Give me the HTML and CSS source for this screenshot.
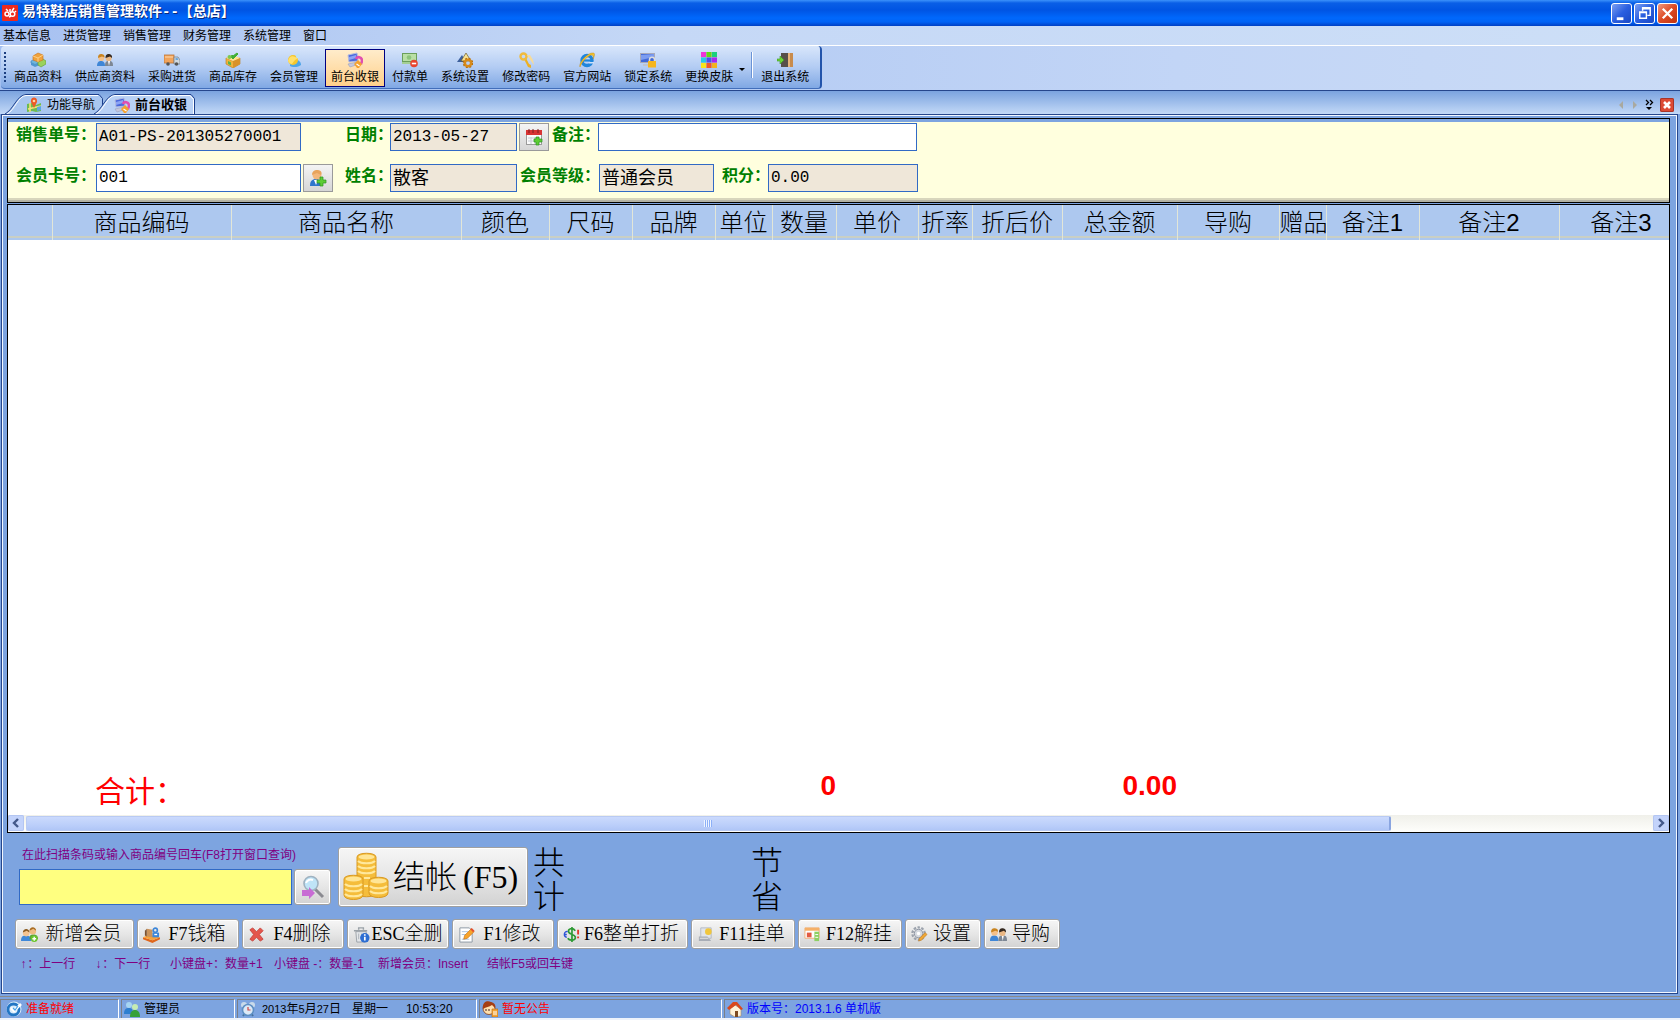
FILE: index.html
```html
<!DOCTYPE html>
<html lang="zh-CN">
<head>
<meta charset="utf-8">
<title>易特鞋店销售管理软件--【总店】</title>
<link rel="stylesheet" href="styles.css">
</head>
<body>
<svg class="sprite" aria-hidden="true">
  <symbol id="boxes" viewBox="0 0 16 16"><path d="M1 9l5-2 4 3-5 3-4-2z" fill="#6fb6dc" stroke="#3a7fb8" stroke-width=".6"/><path d="M1 10v3l4 2 5-2v-3l-5 2z" fill="#4f97cf"/><path d="M8 9l5-2 3 2v3l-5 3-3-2z" fill="#9ad25c" stroke="#5f9a34" stroke-width=".6"/><path d="M3 4l5-3 5 2v5l-5 2-5-2z" fill="#f0a23c" stroke="#c8741c" stroke-width=".6"/><path d="M3 4l5 2 5-3M8 6v4" fill="none" stroke="#ffd38a" stroke-width=".9"/></symbol>
  <symbol id="people" viewBox="0 0 16 16"><path d="M0 14c0-4 2-5 4-5s4 1 4 5z" fill="#3f86d6"/><path d="M8 14c0-4 1-5 4-5s4 1 4 5z" fill="#7d8794"/><path d="M11 9h2l-1 5z" fill="#fff"/><circle cx="4.300" cy="6" r="3" fill="#f4c089"/><circle cx="11.600" cy="6.300" r="3" fill="#eab783"/><path d="M1 6c0-3 1-4 3-4s4 1 3.500 3.500L5 4.500z" fill="#c98420"/><path d="M8.500 6c0-3 1-4 3-4s4 1 3.500 4l-2-1.500z" fill="#34281f"/></symbol>
  <symbol id="truck" viewBox="0 0 16 16"><rect x="0" y="3" width="10" height="8" fill="#f1a45c" stroke="#bd7434" stroke-width=".8"/><path d="M1 5h8" stroke="#ffd8aa"/><path d="M10 5h4l2 3v4h-6z" fill="#cfd8e0" stroke="#77838f" stroke-width=".8"/><path d="M11.500 6h2l1 2h-3z" fill="#6aa7de"/><circle cx="4" cy="12" r="1.800" fill="#555"/><circle cx="12.500" cy="12" r="1.800" fill="#555"/></symbol>
  <symbol id="stock" viewBox="0 0 16 16"><path d="M1 6l7 3 7-3v6l-7 4-7-4z" fill="#f0b23c" stroke="#b97a17" stroke-width=".6"/><path d="M8 9v7l7-4V6z" fill="#d8922a"/><path d="M1 6l7-3 7 3-7 3z" fill="#ffe08c"/><path d="M6 5l2 2 5-5-1-1-4 3-1-1z" fill="#41ae35" stroke="#41ae35"/><circle cx="4.500" cy="5" r="2" fill="#7cc850"/><path d="M3 9l3 1.500v3L3 12z" fill="#59b44a"/></symbol>
  <symbol id="member" viewBox="0 0 16 16"><path d="M4 14c0-4 3-6 6-6s5 2 5 5c-2 2-8 3-11 1z" fill="#4da5e8"/><circle cx="7" cy="8" r="5" fill="#f6c62c"/><path d="M2 9c1-6 6-6 10-2-3 0-4 2-6 5-2 0-3-1-4-3z" fill="#ffe06a"/><circle cx="12" cy="4" r="2.200" fill="#bde0f7"/></symbol>
  <symbol id="cashier" viewBox="0 0 16 16"><path d="M1 3l9-2 1 8-9 1z" fill="#4b68dc" stroke="#b4bce0"/><path d="M2 5l7-2 0 3-7 2z" fill="#8ca4f4"/><path d="M1 12l9-2 2 2-9 3z" fill="#c4c8dc" stroke="#9a9fc0" stroke-width=".6"/><path d="M9 7c1-3 6-2 6 1.500 0 2-1 2-1 4" fill="none" stroke="#e04fb0" stroke-width="2.600"/><path d="M7 12l4-4 4 4-3 4h-2z" fill="#f6a22d"/><path d="M9.500 12l3 2" stroke="#fff" stroke-width="1.200"/></symbol>
  <symbol id="payment" viewBox="0 0 16 16"><rect x=".5" y="1.500" width="14" height="8" fill="#b9dfa5" stroke="#6b9f5b"/><rect x="0" y="10" width="11" height="2" fill="#a4cf94"/><circle cx="7" cy="5.500" r="2.300" fill="#8cc47a"/><circle cx="12" cy="11.500" r="3.800" fill="#e8442e"/><path d="M9.800 11.500h4.400" stroke="#fff" stroke-width="1.600"/></symbol>
  <symbol id="settings" viewBox="0 0 16 16"><path d="M0 10l5-7 4 7z" fill="#3c5f9c"/><path d="M4 9l5-8 5 8z" fill="#f7e294" stroke="#6d5b28" stroke-width=".7"/><circle cx="11" cy="11" r="3.200" fill="none" stroke="#d88a18" stroke-width="2.600"/><circle cx="11" cy="11" r="4.700" fill="none" stroke="#b9700c" stroke-width="1.200" stroke-dasharray="2 1.700"/></symbol>
  <symbol id="key" viewBox="0 0 16 16"><path d="M6 7l4 8 3 1v-3l-2-1-3-6z" fill="#edb024"/><circle cx="5.500" cy="4.500" r="3" fill="none" stroke="#f0bb3e" stroke-width="2.400"/><path d="M9 3l4 6 3 4-1-5-3-5z" fill="#f7db98"/></symbol>
  <symbol id="ie" viewBox="0 0 16 16"><circle cx="8" cy="8.500" r="5" fill="none" stroke="#1f86dc" stroke-width="3.400"/><path d="M4 8.500h9" stroke="#1f86dc" stroke-width="2.200"/><path d="M9.500 10h5.500v1.600h-5z" fill="#cfe0f8"/><path d="M1 15C-1 11 9 0 14 1c3 0 1 4 0 6 1-4-1-5-4-3C5 7 2 12 1 15z" fill="#f3c22d" stroke="#b98412" stroke-width=".4"/></symbol>
  <symbol id="lockpc" viewBox="0 0 16 16"><rect x=".5" y="1.500" width="14" height="9" fill="#4169d8" stroke="#a8a8b8"/><path d="M1 3l13-1v3L1 8z" fill="#7c9cf0"/><path d="M3 12h8v2H3z" fill="#c0c4ce"/><path d="M9.500 10V7.500c0-3 5-3 5 0V10" fill="none" stroke="#dcdcdc" stroke-width="1.500"/><rect x="8" y="9" width="8" height="6.500" fill="#f5b51e"/></symbol>
  <symbol id="skin" viewBox="0 0 16 16"><rect width="16" height="16" fill="#b9b9c9"/><rect width="5" height="5" fill="#f033d8"/><rect x="5.500" width="5" height="5" fill="#63d813"/><rect x="11" width="5" height="5" fill="#19d07c"/><rect y="5.500" width="5" height="5" fill="#26c9e8"/><rect x="5.500" y="5.500" width="5" height="5" fill="#4c4ff0"/><rect x="11" y="5.500" width="5" height="5" fill="#a62af0"/><rect y="11" width="5" height="5" fill="#f7e41c"/><rect x="5.500" y="11" width="5" height="5" fill="#f2582a"/><rect x="11" y="11" width="5" height="5" fill="#f3b41c"/></symbol>
  <symbol id="exit" viewBox="0 0 16 16"><rect x="4" y="1" width="9" height="14" fill="#57504a"/><path d="M11 1h5v14h-5z" fill="#c88b4c"/><path d="M11 1h2v14h-2z" fill="#e8b67c"/><path d="M0 7h3V4l4 4-4 4V9H0z" fill="#6fd23a" stroke="#3b9a20" stroke-width=".6"/></symbol>
  <symbol id="guide" viewBox="0 0 16 16"><path d="M1 7l5-1 4 2 5-2v8l-5 1-4-1-5 1z" fill="#6dbb50"/><path d="M4 6v9M2 12l13-3" stroke="#f3e27c" stroke-width="1.600" fill="none"/><path d="M11 10l4-1v4l-4 1z" fill="#5aa8e0"/><path d="M8 11L5 5c-1-6 7-6 6 0z" fill="#ec5a26"/><circle cx="8" cy="4" r="1.300" fill="#ffd6a0"/></symbol>
  <symbol id="adduser" viewBox="0 0 18 18"><path d="M1 17c0-5 2-7 6-7s5 2 5 7z" fill="#2f76cc"/><path d="M5 11h4l-2 5z" fill="#fff"/><circle cx="8" cy="6" r="4.500" fill="#f3b77b"/><path d="M3 6c0-4 3-5 5-5s6 1 4 5L8 4z" fill="#e8a45c"/><path d="M11 8h3v3h3v3h-3v3h-3v-3H8v-3h3z" fill="#5ccc34" stroke="#2b9422" stroke-width=".7"/></symbol>
  <symbol id="calendar" viewBox="0 0 18 18"><rect x="1.500" y="2.500" width="15" height="14" fill="#fafafa" stroke="#9b9b9b"/><path d="M1 2h16v5H1z" fill="#d83434"/><path d="M4 1v4M8 1v4M13 1v4" stroke="#7b2020"/><path d="M3 10h12M3 13h12M6 9v7M10 9v7" stroke="#c6ccd4"/><path d="M11 9h3v2h3v3h-3v3h-3v-3H9v-3h2z" fill="#5ccc34" stroke="#2b9422" stroke-width=".7"/></symbol>
  <symbol id="search" viewBox="0 0 24 24"><path d="M14 14l8 8" stroke="#8a8a90" stroke-width="3"/><circle cx="10" cy="8.500" r="7" fill="#bfe4f7" stroke="#9fb2c0" stroke-width="1.600"/><path d="M5 8c1-3 4-4 7-3" fill="none" stroke="#fff" stroke-width="2"/><path d="M1 15h7v-3l6 6-6 6v-3H1z" fill="#c86cd4"/></symbol>
  <symbol id="coins" viewBox="0 0 46 50"><g fill="#f5bd3b" stroke="#d99a24"><path d="M14 5v36c0 5 19 5 19 0V5c0-5-19-5-19 0z"/><path d="M1 27v16c0 6 19 6 19 0V27c0-5-19-5-19 0z"/><path d="M26 29v12c0 6 19 6 19 0V29c0-5-19-5-19 0z"/></g><g fill="#ffe595"><ellipse cx="23.500" cy="5" rx="8" ry="2.500"/><ellipse cx="10.500" cy="27" rx="8" ry="2.500"/><ellipse cx="35.500" cy="29" rx="8" ry="2.500"/></g><g fill="none" stroke="#ffe89c" stroke-width="2.200"><path d="M15 9c3 3 14 3 17 0M15 14c3 3 14 3 17 0M15 19c3 3 14 3 17 0M21 26h6M21 34h4M2 32c3 3 14 3 17 0M2 37c3 3 14 3 17 0M2 42c3 3 14 3 17 0M27 34c3 3 14 3 17 0M27 39c3 3 14 3 17 0"/></g></symbol>
  <symbol id="newmember" viewBox="0 0 18 18"><path d="M0 16c0-5 2-6 5-6s6 1 6 6z" fill="#3f88d8"/><path d="M9 14c0-4 1-5 4-5s5 1 5 5z" fill="#5aa436"/><circle cx="12.500" cy="5.500" r="3.500" fill="#efbb83"/><path d="M9 5c0-5 7-5 7 0l-3-2z" fill="#a86c22"/><circle cx="5.500" cy="7.500" r="3.500" fill="#f5c490"/><path d="M2 7c0-5 7-5 7 0L6 5z" fill="#8a5a20"/><circle cx="14" cy="13.500" r="3.500" fill="#6bc52c"/><path d="M12 13.500h4M14 11.500v4" stroke="#fff" stroke-width="1.400"/></symbol>
  <symbol id="cashbox" viewBox="0 0 18 18"><path d="M0 12l10 3 8-3v2l-8 4-10-4z" fill="#e0671c"/><path d="M0 12l7-3 11 3-8 3z" fill="#f7a13a"/><path d="M4 3l6 1v8l-6-1z" fill="#c9935c"/><path d="M2 5l2-2v8l-2-1z" fill="#7b5130"/><circle cx="13" cy="4.500" r="2.200" fill="none" stroke="#3d86d8" stroke-width="1.800"/><path d="M10 7h7v5h-7z" fill="#3d86d8"/><path d="M12 9h3" stroke="#fff" stroke-width="1.400"/></symbol>
  <symbol id="delete" viewBox="0 0 18 18"><path d="M2 4l3-2 4 4 4-4 3 3-4 4 4 5-3 2-4-4-4 4-3-2 4-5z" fill="#e4564c" stroke="#c23a34" stroke-width=".8"/></symbol>
  <symbol id="trash" viewBox="0 0 18 18"><path d="M3 6h11l-1 11H4z" fill="#e4e7ea" stroke="#9ba2a8"/><path d="M1 5h14M6 4V2h5v2" fill="none" stroke="#9ba2a8" stroke-width="1.500"/><path d="M6 8v6M9 8v6" stroke="#acb3b9"/><circle cx="12.500" cy="12.500" r="5" fill="#2d6ed2"/><path d="M12.500 8.800v1.600M12.500 11.400v4" stroke="#fff" stroke-width="1.800"/></symbol>
  <symbol id="edit" viewBox="0 0 18 18"><path d="M2 2h10l3 3v12H2z" fill="#fff" stroke="#8c98a4"/><path d="M4 6h7M4 9h5M4 14h8" stroke="#a9c1dc"/><path d="M6 14l1-4 7-7 3 3-7 7z" fill="#f7a42c" stroke="#c2721a" stroke-width=".7"/><path d="M13 3.500l1.500-1.500 3 3L16 6.500z" fill="#e3502f"/></symbol>
  <symbol id="discount" viewBox="0 0 18 18"><path d="M13 5c-3-4-8-2-7 1.500 1 2.500 6 2 7 5 1 4-6 4.500-8 1.500M9.500 1v16" fill="none" stroke="#2f9a35" stroke-width="1.800"/><path d="M5 6c-4-1-5 5-1 6M1 9h3" fill="none" stroke="#2e55d8" stroke-width="1.500"/><path d="M16 4v5M16 11v2" stroke="#df3c2b" stroke-width="2"/></symbol>
  <symbol id="hang" viewBox="0 0 18 18"><path d="M4 2h11v11H4z" fill="#e0e4ea" stroke="#b4bac4"/><path d="M2 11h9l4 5H2z" fill="#a8adb6"/><path d="M3 13h9" stroke="#e7e7e7"/><circle cx="12" cy="6" r="3.500" fill="#f0c63d"/></symbol>
  <symbol id="unhang" viewBox="0 0 18 18"><path d="M1 2h15v11H1z" fill="#fff" stroke="#f0b078"/><path d="M1 2h15v3H1z" fill="#f5b068"/><path d="M3 7h5v5H3z" fill="#e25b42"/><path d="M11 6h5v10h-5z" fill="#8ed063"/><path d="M12 9h3M12 12h3" stroke="#fff"/></symbol>
  <symbol id="gear" viewBox="0 0 18 18"><circle cx="8" cy="8" r="6.500" fill="none" stroke="#9ca3ad" stroke-width="2.400" stroke-dasharray="2.600 1.500"/><circle cx="8" cy="8" r="4.500" fill="#d5d9df" stroke="#8b93a0"/><circle cx="8" cy="8" r="1.800" fill="#fff"/><path d="M8 16l1-3 6-6 2 2-6 6z" fill="#f0a736" stroke="#b67621" stroke-width=".6"/></symbol>
  <symbol id="ready" viewBox="0 0 16 16"><circle cx="8" cy="8" r="7.500" fill="#d9ecfa"/><circle cx="7.500" cy="8.500" r="5.500" fill="none" stroke="#2276c4" stroke-width="2.800"/><path d="M5 7l3 3 7-7" fill="none" stroke="#fff" stroke-width="2.600"/><path d="M7 7l2 2 3-4" fill="none" stroke="#49a4ea" stroke-width="1.200"/></symbol>
  <symbol id="group" viewBox="0 0 16 16"><circle cx="5" cy="4" r="3" fill="#a6d5f2"/><path d="M0 13c0-5 2-6 5-6s4 2 4 6z" fill="#2e7fd0"/><circle cx="11" cy="6" r="3" fill="#c5ebb3"/><path d="M6 16c0-5 2-7 5-7s5 2 5 7z" fill="#35a13a"/></symbol>
  <symbol id="clock" viewBox="0 0 16 16"><circle cx="4" cy="4" r="3" fill="#c9daea"/><circle cx="12" cy="4" r="3" fill="#c9daea"/><path d="M3 15l2-3M13 15l-2-3" stroke="#48719c" stroke-width="2"/><circle cx="8" cy="9" r="5.500" fill="#dce9f6" stroke="#5d8fc4" stroke-width="1.600"/><path d="M8 6v3h2.500" fill="none" stroke="#c44" stroke-width="1.200"/></symbol>
  <symbol id="notice" viewBox="0 0 16 16"><circle cx="7" cy="7.500" r="6" fill="#ffe0ae" stroke="#8a3b12" stroke-width=".8"/><path d="M1 8C0 1 5-1 9 1c4 1 5 4 4 6L10 4C7 6 4 6 1 8z" fill="#a63f14"/><path d="M4 8v2M7 8v2" stroke="#422"/><path d="M10 8h6v8h-6z" fill="#f5a637" stroke="#b26411" stroke-width=".6"/><path d="M11 11h4M11 13h4" stroke="#fff"/></symbol>
  <symbol id="home" viewBox="0 0 16 16"><path d="M3 8l5-4 6 4v7l-6 1-5-3z" fill="#fff3d8" stroke="#a98a5e" stroke-width=".6"/><path d="M0 7l6-6 4 0 6 7-2 1-5-5-7 5z" fill="#d9481c"/><path d="M8 10h3v6H8z" fill="#7c4a20"/></symbol>
</svg>

<header class="titlebar">
  <svg class="app-logo" viewBox="0 0 16 16"><rect width="16" height="16" rx="1" fill="#ee2a1e"/><g fill="none" stroke="#fff" stroke-width="1.500"><circle cx="5" cy="9" r="2"/><circle cx="10.500" cy="9" r="2.300"/><path d="M4 4l2 2M8 4v3M12 3l-2 3M13 7l1-1M7 12l2-1"/></g></svg>
  <h1>易特鞋店销售管理软件--【总店】</h1>
  <div class="window-buttons">
    <button aria-label="最小化"><svg viewBox="0 0 20 20"><path d="M5 14h7v3H5z" fill="#fff"/></svg></button>
    <button aria-label="还原"><svg viewBox="0 0 20 20"><path d="M8 7V4h8v8h-3M8 5h8" fill="none" stroke="#fff" stroke-width="1.500"/><path d="M5 8.500h7v6.500H5zM5 9h7" fill="none" stroke="#fff" stroke-width="1.500"/></svg></button>
    <button class="close" aria-label="关闭"><svg viewBox="0 0 20 20"><path d="M5 5l10 10M15 5L5 15" stroke="#fff" stroke-width="2.400"/></svg></button>
  </div>
</header>

<nav class="menubar">
  <button>基本信息</button><button>进货管理</button><button>销售管理</button><button>财务管理</button><button>系统管理</button><button>窗口</button>
</nav>

<div class="toolbar-strip">
  <div class="toolbar">
    <button><svg><use href="#boxes"/></svg>商品资料</button>
    <button><svg><use href="#people"/></svg>供应商资料</button>
    <button><svg><use href="#truck"/></svg>采购进货</button>
    <button><svg><use href="#stock"/></svg>商品库存</button>
    <button><svg><use href="#member"/></svg>会员管理</button>
    <button class="active"><svg><use href="#cashier"/></svg>前台收银</button>
    <button><svg><use href="#payment"/></svg>付款单</button>
    <button><svg><use href="#settings"/></svg>系统设置</button>
    <button><svg><use href="#key"/></svg>修改密码</button>
    <button><svg><use href="#ie"/></svg>官方网站</button>
    <button><svg><use href="#lockpc"/></svg>锁定系统</button>
    <button><svg><use href="#skin"/></svg>更换皮肤</button>
    <i class="caret"></i>
    <i class="divider"></i>
    <button><svg><use href="#exit"/></svg>退出系统</button>
  </div>
</div>

<div class="tabstrip">
  <button class="tab">
    <svg class="tab-shape" viewBox="0 0 98 20" preserveAspectRatio="none"><path d="M0 20C8 16 12 1 21 .5H94l3.500 4V20z" fill="#a9c6f0"/><path d="M0 20C8 16 12 1 21 .5H94l3.500 4V20" fill="none" stroke="#1c3f8c"/><path d="M2 20C10 16 13 2 21 1.500H93" fill="none" stroke="#fff"/></svg>
    <svg class="icon"><use href="#guide"/></svg><span>功能导航</span>
  </button>
  <button class="tab current">
    <svg class="tab-shape" viewBox="0 0 101 20" preserveAspectRatio="none"><path d="M0 20C8 16 12 1 21 .5H97l3.500 4V20z" fill="#b9d1f5"/><path d="M0 20C8 16 12 1 21 .5H97l3.500 4V20" fill="none" stroke="#1c3f8c"/><path d="M2 20C10 16 13 2 21 1.500H96l3.500 4V20" fill="none" stroke="#fff"/></svg>
    <svg class="icon"><use href="#cashier"/></svg><span>前台收银</span>
  </button>
  <div class="tab-tools">
    <button aria-label="上一个"><svg viewBox="0 0 14 14"><path d="M9 3v8L5 7z" fill="#a9a9a0"/></svg></button>
    <button aria-label="下一个"><svg viewBox="0 0 14 14"><path d="M5 3v8l4-4z" fill="#a9a9a0"/></svg></button>
    <button aria-label="更多"><svg viewBox="0 0 14 14"><path d="M4 2l2.500 2.500L4 7M8 2l2.500 2.500L8 7" fill="none" stroke="#000" stroke-width="1.300"/><path d="M4 9h6l-3 3z"/></svg></button>
    <button class="tab-close" aria-label="关闭标签"><svg viewBox="0 0 14 14"><path d="M4 4l6 6M10 4l-6 6" stroke="#fff" stroke-width="2.600"/></svg></button>
  </div>
</div>

<main class="workspace">
  <form class="order-form">
    <div class="form-row">
      <label class="wide" for="order-no">销售单号：</label><input id="order-no" class="w-card" value="A01-PS-201305270001" readonly>
      <label class="short date" for="order-date">日期：</label><input id="order-date" class="w-name" value="2013-05-27" readonly>
      <button type="button" class="mini" aria-label="选择日期"><svg><use href="#calendar"/></svg></button>
      <label class="short" for="remark">备注：</label><input id="remark" class="w-remark">
    </div>
    <div class="form-row">
      <label class="wide" for="card-no">会员卡号：</label><input id="card-no" class="w-card" value="001">
      <button type="button" class="mini" aria-label="选择会员"><svg><use href="#adduser"/></svg></button>
      <label class="short name" for="member-name">姓名：</label><input id="member-name" class="w-name han" value="散客" readonly>
      <label class="level" for="member-level">会员等级：</label><input id="member-level" class="w-level han" value="普通会员" readonly>
      <label class="short points" for="points">积分：</label><input id="points" class="w-points" value="0.00" readonly>
    </div>
  </form>

  <section class="grid-panel">
    <div class="grid-view">
      <table>
        <colgroup><col class="c44"><col class="c179"><col class="c230"><col class="c88"><col class="c83"><col class="c83"><col class="c57"><col class="c64"><col class="c82"><col class="c54"><col class="c90"><col class="c115"><col class="c102"><col class="c47"><col class="c93"><col class="c140"><col class="c124"></colgroup>
        <thead><tr><th></th><th>商品编码</th><th>商品名称</th><th>颜色</th><th>尺码</th><th>品牌</th><th>单位</th><th>数量</th><th>单价</th><th>折率</th><th>折后价</th><th>总金额</th><th>导购</th><th>赠品</th><th>备注1</th><th>备注2</th><th>备注3</th></tr></thead>
        <tbody><tr><td colspan="17"></td></tr></tbody>
        <tfoot><tr><td></td><td colspan="2" class="total-label">合计：</td><td colspan="5" class="total">0</td><td colspan="4" class="total">0.00</td><td colspan="5"></td></tr></tfoot>
      </table>
    </div>
    <div class="scrollbar">
      <button aria-label="向左滚动"><svg viewBox="0 0 16 16"><path d="M10 4L6 8l4 4" fill="none" stroke="#44598a" stroke-width="2.400"/></svg></button>
      <div class="track"><div class="thumb"><i class="grip"></i></div></div>
      <button aria-label="向右滚动"><svg viewBox="0 0 16 16"><path d="M6 4l4 4-4 4" fill="none" stroke="#44598a" stroke-width="2.400"/></svg></button>
    </div>
  </section>

  <section class="controls">
    <div class="checkout">
      <div class="scan">
        <label for="barcode">在此扫描条码或输入商品编号回车(F8打开窗口查询)</label>
        <div class="scan-row">
          <input id="barcode">
          <button class="find" aria-label="查询"><svg><use href="#search"/></svg></button>
        </div>
      </div>
      <button class="settle"><svg><use href="#coins"/></svg><span>结帐<span class="settle-key">(F5)</span></span></button>
      <div class="tally">共<br>计</div>
      <div class="tally saved">节<br>省</div>
    </div>
    <div class="actions">
      <button class="b119"><svg><use href="#newmember"/></svg><span>新增会员</span></button>
      <button class="b102"><svg><use href="#cashbox"/></svg><span><kbd>F7</kbd>钱箱</span></button>
      <button class="b102"><svg><use href="#delete"/></svg><span><kbd>F4</kbd>删除</span></button>
      <button class="b102"><svg><use href="#trash"/></svg><span><kbd>ESC</kbd>全删</span></button>
      <button class="b102"><svg><use href="#edit"/></svg><span><kbd>F1</kbd>修改</span></button>
      <button class="b131"><svg><use href="#discount"/></svg><span><kbd>F6</kbd>整单打折</span></button>
      <button class="b104"><svg><use href="#hang"/></svg><span><kbd>F11</kbd>挂单</span></button>
      <button class="b104"><svg><use href="#unhang"/></svg><span><kbd>F12</kbd>解挂</span></button>
      <button class="b76"><svg><use href="#gear"/></svg><span>设置</span></button>
      <button class="b76"><svg><use href="#people"/></svg><span>导购</span></button>
    </div>
    <div class="hints">
      <span class="arrow-hint"><b>↑</b>：上一行</span><span class="arrow-hint"><b>↓</b>：下一行</span><span class="h104">小键盘+：数量+1</span><span class="h104">小键盘 -：数量-1</span><span class="h109">新增会员：Insert</span><span>结帐F5或回车键</span>
    </div>
  </section>
</main>

<footer class="statusbar">
  <div class="s120 red"><svg><use href="#ready"/></svg>准备就绪</div>
  <div class="s114"><svg><use href="#group"/></svg>管理员</div>
  <div class="s243"><svg><use href="#clock"/></svg><time><span class="num">2013</span>年<span class="num">5</span>月<span class="num">27</span>日</time><span>星期一</span><time class="time">10:53:20</time></div>
  <div class="s244 red"><svg><use href="#notice"/></svg>暂无公告</div>
  <div class="rest blue"><svg><use href="#home"/></svg><span>版本号：2013.1.6 单机版</span></div>
</footer>
</body>
</html>
```
FILE: styles.css
```css
* { box-sizing: border-box; }

body {
  margin: 0;
  height: 100vh;
  min-height: 600px;
  display: flex;
  flex-direction: column;
  overflow: hidden;
  background: #7da4e0;
  color: #000;
  font: 12px/16px "Liberation Sans", "Noto Sans CJK SC", sans-serif;
}

button { margin: 0; padding: 0; border: 0; background: none; color: inherit; font: inherit; white-space: nowrap; }
svg { display: block; flex: none; }
input { border: 1px solid #316ac5; border-radius: 0; outline: 0; }
.sprite { position: absolute; width: 0; height: 0; }

/* Title bar */
.titlebar {
  display: flex;
  align-items: center;
  height: 26px;
  padding: 0 2px;
  flex: none;
  background: linear-gradient(#3c92fb 0, #0a5fe6 3px, #0054e3 10px, #0068fc 18px, #0062f5 22px, #0040c4 26px);
}
.app-logo { width: 16px; height: 16px; }
.titlebar h1 {
  flex: 1;
  margin: 0 0 0 4px;
  padding-bottom: 2px;
  color: #fff;
  font: bold 14px/20px "Liberation Mono", "Noto Sans CJK SC", monospace;
  text-shadow: 1px 1px 0 #0a2a7c;
}
.window-buttons { display: flex; gap: 2px; }
.window-buttons button {
  width: 21px;
  height: 21px;
  border: 1px solid #fff;
  border-radius: 3px;
  background: linear-gradient(135deg, #7c9ff2, #2a5fe0 50%, #1a48c4);
}
.window-buttons .close { background: linear-gradient(135deg, #f0987e, #dd4a24 50%, #c0330f); }

/* Menu and toolbar */
.menubar {
  display: flex;
  gap: 12px;
  height: 20px;
  padding: 0 3px;
  flex: none;
  border-bottom: 1px solid #fff;
  background: linear-gradient(90deg, #a7c1f1, #c5d8f6 40%, #cddff7);
}
.toolbar-strip {
  display: flex;
  height: 45px;
  flex: none;
  border-bottom: 1px solid #26468c;
  background: linear-gradient(90deg, #a3bff0, #c2d5f6 70%, #cadbf6);
}
.toolbar {
  display: flex;
  gap: 1px;
  height: 43px;
  margin-left: 1px;
  padding: 3px 5px 2px 7px;
  position: relative;
  border-right: 2px solid #2354ab;
  border-bottom: 1px solid #426eba;
  border-radius: 4px;
  background: linear-gradient(#d8e6fb, #b3ccf3 50%, #80a8e4);
}
.toolbar::before {
  content: "";
  position: absolute;
  left: 3px;
  top: 6px;
  width: 2px;
  height: 31px;
  background: repeating-linear-gradient(#1c3f80 0 2px, transparent 2px 4px);
}
.toolbar button {
  display: flex;
  flex-direction: column;
  align-items: center;
  gap: 1px;
  height: 38px;
  padding: 2px 5px 0;
  border: 1px solid transparent;
}
.toolbar svg { width: 16px; height: 16px; }
.toolbar .active { border-color: #000080; background: linear-gradient(#ffeccb, #ffd08a); }
.caret { align-self: center; width: 0; margin: 4px 4px 0 -1px; border: 3px solid transparent; border-top-color: #000; border-bottom: 0; }
.divider { width: 1px; height: 26px; margin: 3px 2px 0 1px; background: #6a93d6; box-shadow: 1px 0 #fff; }

/* Tabs */
.tabstrip {
  display: flex;
  align-items: flex-end;
  height: 23px;
  padding: 0 6px 0 5px;
  flex: none;
  background: linear-gradient(#7ba3df, #c3d9f7);
}
.tab { display: flex; align-items: center; position: relative; z-index: 0; width: 98px; height: 20px; padding: 2px 7px 0 21px; }
.tab.current { width: 101px; margin-left: -9px; padding-left: 20px; font-weight: bold; font-size: 13px; }
.tab span { margin-left: 5px; }
.tab .icon { width: 16px; height: 16px; }
.tab-shape { position: absolute; inset: 0; z-index: -1; width: 100%; height: 20px; }
.tab-tools { display: flex; align-items: center; height: 18px; margin-left: auto; }
.tab-tools svg { width: 14px; height: 14px; }
.tab-close { margin-left: 4px; border-radius: 2px; background: #dc4a34; box-shadow: inset 0 0 0 1px #a83428; }

/* Workspace frame */
.workspace {
  display: flex;
  flex-direction: column;
  flex: 1;
  min-height: 0;
  margin: 0 2px 0 1px;
  padding: 3px 7px 0 5px;
  border: 1px solid #26468c;
  box-shadow: inset 0 0 0 1px #f2f7ff;
}

/* Order form */
.order-form {
  display: flex;
  flex-direction: column;
  gap: 13px;
  height: 85px;
  flex: none;
  border: 1px solid #000;
  padding: 4px 8px 0;
  background: linear-gradient(#7da4e0 3px, #ffffde 3px 79px, #d8d6bc 79px 81px, #b4b3a4 81px);
}
.form-row { display: flex; height: 28px; }
.form-row label { color: #008000; font-size: 16px; line-height: 24px; font-weight: bold; white-space: nowrap; }
.form-row input { height: 28px; padding: 0 2px; background: #fff; font: 16px "Liberation Mono", "Noto Sans CJK SC", monospace; }
.form-row input[readonly] { background: #efe7d9; }
.form-row .han { padding-bottom: 4px; font-size: 18px; }
.wide { width: 80px; }
.short { width: 46px; }
.date { margin-left: 44px; width: 45px; }
.name { margin-left: 9px; width: 45px; }
.level { width: 79px; margin-left: 3px; }
.points { margin-left: 8px; }
.w-card { width: 205px; }
.w-name { width: 127px; }
.w-remark { width: 319px; }
.w-level { width: 115px; }
.w-points { width: 150px; }
.mini {
  display: flex;
  align-items: center;
  justify-content: center;
  width: 30px;
  height: 28px;
  margin: 0 3px 0 2px;
  border: 1px solid #9a9a9a;
  background: linear-gradient(#f4f4f4, #d6d6d6);
}
.mini svg { width: 18px; height: 18px; }

/* Goods grid */
.grid-panel { display: flex; flex-direction: column; flex: 1; min-height: 0; margin-top: 1px; border: 1px solid #000; background: #fff; }
.grid-view { flex: 1; min-height: 0; overflow: hidden; }
table { width: 1675px; height: 100%; table-layout: fixed; border-collapse: collapse; }
.c44 { width: 44px; } .c47 { width: 47px; } .c54 { width: 54px; } .c57 { width: 57px; }
.c64 { width: 64px; } .c82 { width: 82px; } .c83 { width: 83px; } .c88 { width: 88px; }
.c90 { width: 90px; } .c93 { width: 93px; } .c102 { width: 102px; } .c115 { width: 115px; }
.c124 { width: 124px; } .c140 { width: 140px; } .c179 { width: 179px; } .c230 { width: 230px; }
thead tr { height: 35px; background: linear-gradient(#adc8ef 31px, #c9cfc5 31px 33px, #adc8ef 33px); }
th { padding: 0; border-right: 1px solid #e2e6d8; overflow: hidden; font-size: 24px; line-height: 32px; font-weight: 300; white-space: nowrap; }
td { padding: 0; }
tfoot tr { height: 58px; }
.total, .total-label { vertical-align: middle; color: #f00; font-size: 28px; line-height: 36px; }
.total-label { padding: 12px 0 0 43px; font-size: 30px; }
.total { text-align: right; font-weight: bold; }

.scrollbar { display: flex; gap: 2px; height: 17px; flex: none; background: linear-gradient(#f0f0ea, #fefefb); }
.scrollbar button { width: 16px; height: 16px; border-radius: 2px; background: #c3d3fb; box-shadow: inset 0 0 0 1px #b4c6f2; }
.track { flex: 1; padding: 1px 0; }
.thumb {
  display: flex;
  align-items: center;
  justify-content: center;
  width: 84%;
  height: 15px;
  border: 1px solid #b9caf3;
  border-right: 2px solid #8aa5e0;
  border-radius: 2px;
  background: linear-gradient(#cbdafd, #bccffa 60%, #b0c6f7);
}
.grip { width: 8px; height: 7px; background: repeating-linear-gradient(90deg, #eef4ff 0 1px, #8cb0f8 1px 2px); }

/* Checkout controls */
.controls { height: 160px; flex: none; padding: 13px 8px 0; }
.checkout { display: flex; height: 73px; }
.scan { margin-left: 4px; color: #800080; }
.scan label { display: block; margin: 0 0 5px 3px; line-height: 18px; }
.scan-row { display: flex; gap: 2px; }
.scan input { width: 273px; height: 36px; background: #ffff80; }
.find, .settle, .actions button {
  display: flex;
  align-items: center;
  border: 1px solid #a0a0a0;
  border-radius: 3px;
  background: linear-gradient(#f6f6f6, #e6e6e6 50%, #d2d2d2);
  box-shadow: inset 0 0 0 1px #fff;
}
.find { justify-content: center; width: 37px; height: 36px; }
.find svg { width: 24px; height: 24px; }
.settle { width: 190px; height: 60px; margin: 1px 5px 0 7px; padding: 0 4px; gap: 4px; font-size: 32px; line-height: 40px; font-weight: 300; font-family: "Liberation Serif", "Noto Sans CJK SC", serif; }
.settle svg { width: 46px; height: 50px; }
.settle-key { margin-left: 6px; }
.tally { width: 32px; font-size: 32px; line-height: 34px; font-weight: 300; }
.saved { margin-left: 186px; }

.actions { display: flex; gap: 3px; }
.actions button { height: 30px; padding: 0 4px 0 5px; font-size: 19px; line-height: 24px; font-weight: 300; }
.actions svg { width: 17px; height: 17px; }
.actions span { flex: 1; text-align: center; }
kbd { font: 18px "Liberation Serif", serif; }
.b76 { width: 76px; } .b102 { width: 102px; } .b104 { width: 104px; } .b119 { width: 119px; } .b131 { width: 131px; }

.hints { display: flex; margin: 7px 0 0 5px; color: #800080; }
.hints b { font: 12px "Liberation Mono", monospace; }
.arrow-hint { width: 75px; }
.h104 { width: 104px; }
.h109 { width: 109px; }

/* Status bar */
.statusbar {
  display: flex;
  gap: 2px;
  height: 24px;
  margin-top: 2px;
  padding-top: 2px;
  flex: none;
  border-top: 1px solid #8a8a8a;
  border-bottom: 2px solid #eef3fb;
}
.statusbar div { display: flex; align-items: center; padding: 0 0 1px 2px; border-top: 1px solid #7a7f88; border-left: 1px solid #7a7f88; border-right: 1px solid #fff; white-space: nowrap; }
.statusbar svg { width: 16px; height: 16px; margin-right: 4px; }
.statusbar .num { font-size: 11px; }
.statusbar .s120 { width: 119px; padding-left: 5px; }
.s114 { width: 114px; } .s243 { width: 240px; } .s244 { width: 243px; }
.s243 svg { margin-right: 6px; }
.s243 span:not(.num) { margin: 0 18px 0 11px; }
.statusbar .rest { flex: 1; border-right: 0; }
.red { color: #f00; }
.blue { color: #00f; }
```
